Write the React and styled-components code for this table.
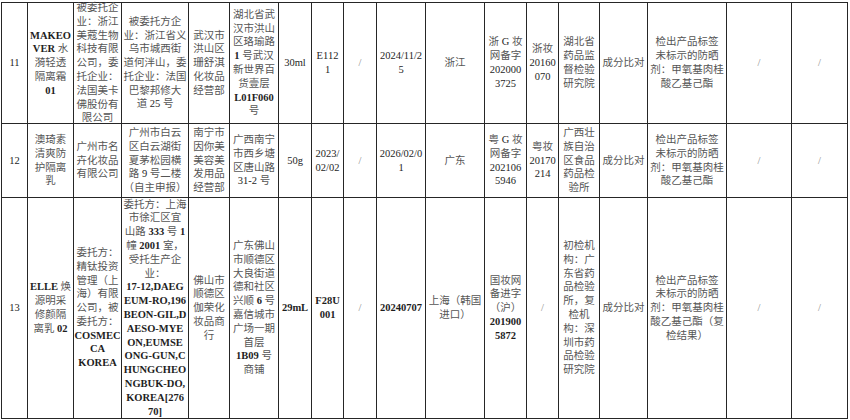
import React from 'react'
import styled, { createGlobalStyle } from 'styled-components'

const GlobalStyle = createGlobalStyle`
  html, body {
    margin: 0;
    padding: 0;
    background: #fff;
  }
  body {
    font-family: "Liberation Serif", "Noto Sans CJK SC", serif;
  }
`

const Page = styled.div`
  padding: 2px 0 0 1px;
  width: 850px;
  height: 420px;
  box-sizing: border-box;
  overflow: hidden;
  background: #fff;
`

const Table = styled.table`
  border-collapse: collapse;
  table-layout: fixed;
  width: 846px;
`

const Td = styled.td`
  border: 1px solid #262626;
  padding: 0;
  vertical-align: middle;
`

const CellBox = styled.div`
  height: ${p => p.$h}px;
  display: flex;
  flex-direction: column;
  justify-content: center;
  align-items: center;
  font-size: 10.5px;
  line-height: 13.8px;
  color: #555;
  white-space: nowrap;
  text-align: center;
`

const Latin = styled.span`
  font-family: "Liberation Serif", serif;
  color: ${p => (p.$dim ? '#8a8a8a' : '#1e1e1e')};
  font-weight: ${p => (p.$bold ? 700 : 400)};
`

// column widths, px
const widths = [26, 46, 48, 67, 41, 49, 33, 32, 33, 49, 59, 42, 32, 41, 48, 79, 65, 56]

const rows = [
  {
    h: 120,
    cells: [
      { l: ['11'] },
      { l: ['MAKEO', 'VER 水', '漪轻透', '隔离霜', '01'], b: true },
      { l: ['被委托企', '业：浙江', '美蔻生物', '科技有限', '公司，委', '托企业：', '法国美卡', '佛股份有', '限公司'] },
      { l: ['被委托方企', '业：浙江省义', '乌市城西街', '道何泮山，委', '托企业：法国', '巴黎邦修大', '道 25 号'] },
      { l: ['武汉市', '洪山区', '珊舒淇', '化妆品', '经营部'] },
      { l: ['湖北省武', '汉市洪山', '区珞瑜路', '1 号武汉', '新世界百', '货壹层', 'L01F060', '号'], b: true },
      { l: ['30ml'] },
      { l: ['E112', '1'] },
      { l: ['/'], dim: true },
      { l: ['2024/11/2', '5'] },
      { l: ['浙江'] },
      { l: ['浙 G 妆', '网备字', '202000', '3725'] },
      { l: ['浙妆', '20160', '070'] },
      { l: ['湖北省', '药品监', '督检验', '研究院'] },
      { l: ['成分比对'] },
      { l: ['检出产品标签', '未标示的防晒', '剂：甲氧基肉桂', '酸乙基己酯'] },
      { l: ['/'], dim: true },
      { l: ['/'], dim: true },
    ],
  },
  {
    h: 73,
    cells: [
      { l: ['12'] },
      { l: ['澳琦素', '清爽防', '护隔离', '乳'] },
      { l: ['广州市名', '卉化妆品', '有限公司'] },
      { l: ['广州市白云', '区白云湖街', '夏茅松园横', '路 9 号二楼', '（自主申报）'] },
      { l: ['南宁市', '因你美', '美容美', '发用品', '经营部'] },
      { l: ['广西南宁', '市西乡塘', '区唐山路', '31-2 号'] },
      { l: ['50g'] },
      { l: ['2023/', '02/02'] },
      { l: ['/'], dim: true },
      { l: ['2026/02/0', '1'] },
      { l: ['广东'] },
      { l: ['粤 G 妆', '网备字', '202106', '5946'] },
      { l: ['粤妆', '20170', '214'] },
      { l: ['广西壮', '族自治', '区食品', '药品检', '验所'] },
      { l: ['成分比对'] },
      { l: ['检出产品标签', '未标示的防晒', '剂：甲氧基肉桂', '酸乙基己酯'] },
      { l: ['/'], dim: true },
      { l: ['/'], dim: true },
    ],
  },
  {
    h: 220,
    cells: [
      { l: ['13'] },
      { l: ['ELLE 焕', '源明采', '修颜隔', '离乳 02'], b: true },
      { l: ['委托方：', '精钛投资', '管理（上', '海）有限', '公司，被', '委托方：', 'COSMEC', 'CA', 'KOREA'], b: true },
      {
        l: ['委托方：上海', '市徐汇区宜', '山路 333 号 1', '幢 2001 室，', '受托生产企', '业：', '17-12,DAEG', 'EUM-RO,196',
          'BEON-GIL,D', 'AESO-MYE', 'ON,EUMSE', 'ONG-GUN,C', 'HUNGCHEO', 'NGBUK-DO,', 'KOREA[276', '70]'],
        b: true,
      },
      { l: ['佛山市', '顺德区', '伽荣化', '妆品商', '行'] },
      { l: ['广东佛山', '市顺德区', '大良街道', '德和社区', '兴顺 6 号', '嘉信城市', '广场一期', '首层', '1B09 号', '商铺'], b: true },
      { l: ['29mL'], b: true },
      { l: ['F28U', '001'], b: true },
      { l: ['/'], dim: true },
      { l: ['20240707'], b: true },
      { l: ['上海（韩国', '进口）'] },
      { l: ['国妆网', '备进字', '（沪）', '201900', '5872'], b: true },
      { l: ['/'], dim: true },
      { l: ['初检机', '构：广', '东省药', '品检验', '所，复', '检机', '构：深', '圳市药', '品检验', '研究院'] },
      { l: ['成分比对'] },
      { l: ['检出产品标签', '未标示的防晒', '剂：甲氧基肉桂', '酸乙基己酯（复', '检结果）'] },
      { l: ['/'], dim: true },
      { l: ['/'], dim: true },
    ],
  },
]

// split a line into latin and cjk runs so latin can be darker / bold
const renderLine = (line, bold, dim) =>
  line.split(/([A-Za-z0-9\-\[\],.\/]+)/).map((part, i) =>
    /[A-Za-z0-9\/]/.test(part)
      ? <Latin key={i} $bold={bold} $dim={dim}>{part}</Latin>
      : part
  )

const Cell = ({ h, cell }) => (
  <Td>
    <CellBox $h={h}>
      {cell.l.map((line, i) => (
        <div key={i}>{renderLine(line, cell.b, cell.dim)}</div>
      ))}
    </CellBox>
  </Td>
)

export default function App() {
  return (
    <Page>
      <GlobalStyle />
      <Table>
        <colgroup>
          {widths.map((w, i) => <col key={i} style={{ width: w }} />)}
        </colgroup>
        <tbody>
          {rows.map((row, r) => (
            <tr key={r}>
              {row.cells.map((cell, c) => <Cell key={c} h={row.h} cell={cell} />)}
            </tr>
          ))}
        </tbody>
      </Table>
    </Page>
  )
}
